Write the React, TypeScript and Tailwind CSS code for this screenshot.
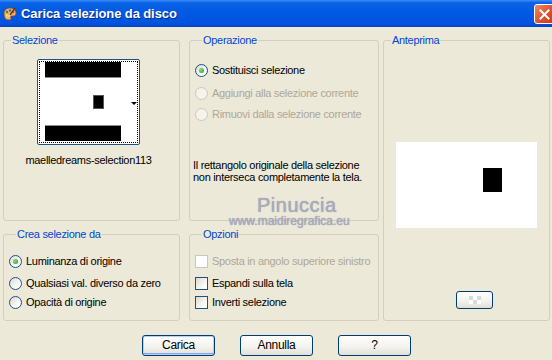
import type { ReactNode } from "react";

function Group({ title, className, children }: { title: string; className: string; children?: ReactNode }) {
  return (
    <fieldset className={`flex flex-col border border-[#D0D0BF] rounded-[3px] ${className}`}>
      <legend className="ml-[7px] px-[1px] leading-[13px] text-[#0046D5]">{title}</legend>
      {children}
    </fieldset>
  );
}

function Radio({ label, checked, disabled, className }: { label: string; checked?: boolean; disabled?: boolean; className?: string }) {
  return (
    <div className={`flex h-[13px] items-center gap-[4px] ${className ?? ""}`}>
      <span
        className={`grid h-[13px] w-[13px] shrink-0 place-items-center rounded-full border ${
          disabled
            ? "border-[#CAC8BB] bg-[#F5F4EA]"
            : "border-[#1C5180] bg-[linear-gradient(135deg,#DCD9CF,#FFFFFF_75%)]"
        }`}
      >
        {checked && <span className="h-[5px] w-[5px] rounded-full bg-[radial-gradient(circle_at_35%_35%,#7EE07E,#21A121)]" />}
      </span>
      <span className={`whitespace-nowrap leading-[13px] ${disabled ? "text-[#ACA899]" : "text-black"}`}>{label}</span>
    </div>
  );
}

function Check({ label, disabled, className }: { label: string; disabled?: boolean; className?: string }) {
  return (
    <div className={`flex h-[13px] items-center gap-[4px] ${className ?? ""}`}>
      <span
        className={`h-[13px] w-[13px] shrink-0 border ${
          disabled
            ? "border-[#CAC8BB] bg-white"
            : "border-[#1C5180] bg-[linear-gradient(135deg,#DCD9CF,#FFFFFF_80%)]"
        }`}
      />
      <span className={`whitespace-nowrap leading-[13px] ${disabled ? "text-[#ACA899]" : "text-black"}`}>{label}</span>
    </div>
  );
}

function XpButton({ label, focused }: { label: string; focused?: boolean }) {
  return (
    <button
      className={`h-[21px] w-[73px] rounded-[3px] border border-[#003C74] bg-[linear-gradient(to_bottom,#FFFFFF,#F4F3EE_55%,#E2E0D6)] text-[12px] leading-[19px] text-black ${
        focused ? "shadow-[inset_0_0_0_1px_#B8D0F7,inset_0_-1px_0_1px_#7FA6EC]" : ""
      }`}
    >
      {label}
    </button>
  );
}

function AppIcon() {
  return (
    <svg width="16" height="16" viewBox="0 0 16 16">
      <path d="M2 7c0-3 3-5 6-5s6 2 6 5-2 3-4 3-2 1-1 2-1 2-3 2C3 14 2 10 2 7z" fill="#F0B070" stroke="#8A4A18" strokeWidth="0.8" />
      <circle cx="5" cy="6" r="1.2" fill="#2F8F3A" />
      <circle cx="8" cy="4.5" r="1.2" fill="#3A66D8" />
      <circle cx="11" cy="6" r="1.2" fill="#E03A2A" />
      <circle cx="5" cy="9.5" r="1.2" fill="#F4E040" />
      <path d="M13 2 L8 9" stroke="#6B3A12" strokeWidth="1.4" />
      <path d="M8 9 L6.8 11" stroke="#D8D8D8" strokeWidth="1.6" />
    </svg>
  );
}

export default function App() {
  return (
    <div className="relative h-[360px] w-[552px] overflow-hidden bg-[#ECE9D8] font-['Liberation_Sans',Arial,sans-serif] text-[11px] tracking-[-0.3px]">
      {/* title bar */}
      <div className="relative flex h-[27px] items-center gap-[3px] overflow-hidden bg-[linear-gradient(to_bottom,#3D8FF6_0%,#0A62E6_10%,#0059E4_45%,#0054DF_85%,#0043C6_100%)] pl-[2px]">
        <AppIcon />
        <span className="text-[13px] font-bold tracking-[-0.1px] text-white [text-shadow:1px_1px_0_#0A2F8A]">
          Carica selezione da disco
        </span>
        <div className="absolute left-[534px] top-[4px] grid h-[20px] w-[21px] place-items-center rounded-[3px] border border-white bg-[linear-gradient(135deg,#F08A66,#E0502C_55%,#C83A1C)]">
          <svg width="11" height="11" viewBox="0 0 11 11">
            <path d="M1.5 1.5 L9.5 9.5 M9.5 1.5 L1.5 9.5" stroke="white" strokeWidth="2" strokeLinecap="square" />
          </svg>
        </div>
      </div>

      {/* body */}
      <div className="flex flex-col pl-[3px] pt-[7px]">
        <div className="flex">
          <div className="flex w-[177px] flex-col gap-[7px]">
            <Group title="Selezione" className="h-[187px]">
              <div className="ml-[33px] mt-[12px] flex w-[103px] flex-col items-center">
                <div className="h-[86px] w-[103px] rounded-[2px] border border-[#1C5180] bg-white p-[1px]">
                  <div className="flex h-full w-full border border-dotted border-black">
                    <div className="ml-[5px] flex h-[79px] w-[78px] flex-col justify-between bg-white">
                      <div className="h-[16px] border-b border-[#8A8A8A] bg-black" />
                      <div className="ml-[48px] h-[14px] w-[11px] border border-[#555] bg-black" />
                      <div className="h-[16px] border-t border-[#8A8A8A] bg-black" />
                    </div>
                    <div className="ml-[10px] mt-[40px] h-0 w-0 border-x-[3px] border-t-[3px] border-x-transparent border-t-black" />
                  </div>
                </div>
                <div className="mt-[9px] whitespace-nowrap leading-[13px] text-black">maelledreams-selection113</div>
              </div>
            </Group>
            <Group title="Crea selezione da" className="h-[93px] pl-[5px]">
              <Radio label="Luminanza di origine" checked className="mt-[14px]" />
              <Radio label="Qualsiasi val. diverso da zero" className="mt-[9px]" />
              <Radio label="Opacità di origine" className="mt-[6px]" />
            </Group>
          </div>

          <div className="ml-[9px] flex w-[190px] flex-col gap-[7px]">
            <Group title="Operazione" className="h-[187px] pl-[5px]">
              <Radio label="Sostituisci selezione" checked className="mt-[17px]" />
              <Radio label="Aggiungi alla selezione corrente" disabled className="mt-[10px]" />
              <Radio label="Rimuovi dalla selezione corrente" disabled className="mt-[8px]" />
              <p className="-ml-[2px] mt-[38px] leading-[12px] text-black">
                Il rettangolo originale della selezione
                <br />
                non interseca completamente la tela.
              </p>
            </Group>
            <Group title="Opzioni" className="h-[93px] pl-[5px]">
              <Check label="Sposta in angolo superiore sinistro" disabled className="mt-[14px]" />
              <Check label="Espandi sulla tela" className="mt-[9px]" />
              <Check label="Inverti selezione" className="mt-[6px]" />
            </Group>
          </div>

          <Group title="Anteprima" className="ml-[4px] h-[287px] w-[167px]">
            <div className="ml-[12px] mt-[95px] h-[86px] w-[141px] bg-white pl-[87px] pt-[26px]">
              <div className="h-[24px] w-[19px] bg-black" />
            </div>
            <div className="ml-[72px] mt-[63px] grid h-[18px] w-[37px] place-items-center rounded-[3px] border border-[#003C74] bg-[linear-gradient(to_bottom,#FFFFFF,#F2F1EC_60%,#E0DED4)]">
              <div className="grid grid-cols-3 grid-rows-2">
                <span className="h-[4px] w-[4px] bg-[#DADADA]" />
                <span className="h-[4px] w-[4px] bg-white" />
                <span className="h-[4px] w-[4px] bg-[#DADADA]" />
                <span className="h-[4px] w-[4px] bg-white" />
                <span className="h-[4px] w-[4px] bg-[#DADADA]" />
                <span className="h-[4px] w-[4px] bg-white" />
              </div>
            </div>
          </Group>
        </div>

        <div className="mt-[14px] flex gap-[25px] pl-[139px]">
          <XpButton label="Carica" focused />
          <XpButton label="Annulla" />
          <XpButton label="?" />
        </div>
      </div>

      {/* watermark */}
      <div className="absolute left-[257px] top-[194px] text-[20px] leading-[22px] tracking-[0.5px] text-[#A9ACBE] [text-shadow:0_0_1px_#8A8EA4]">
        Pinuccia
      </div>
      <div className="absolute left-[229px] top-[214px] text-[12px] leading-[14px] tracking-[0px] text-[#A9ACBE] [text-shadow:0_0_1px_#8A8EA4]">
        www.maidiregrafica.eu
      </div>
    </div>
  );
}
